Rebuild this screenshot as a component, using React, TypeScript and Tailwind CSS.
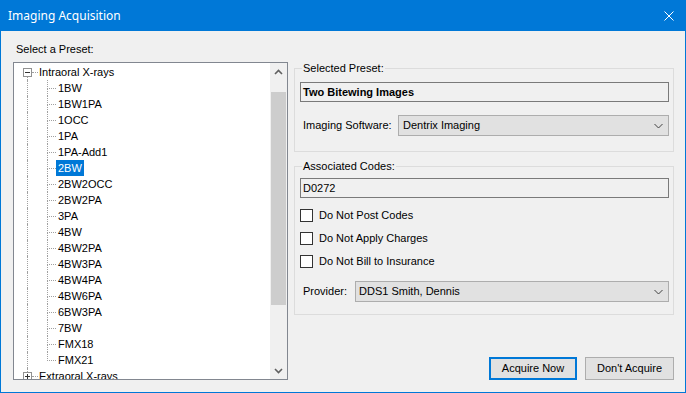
import React from "react";

const items = [
  "1BW",
  "1BW1PA",
  "1OCC",
  "1PA",
  "1PA-Add1",
  "2BW",
  "2BW2OCC",
  "2BW2PA",
  "3PA",
  "4BW",
  "4BW2PA",
  "4BW3PA",
  "4BW4PA",
  "4BW6PA",
  "6BW3PA",
  "7BW",
  "FMX18",
  "FMX21",
];

function Chevron({ up = false }: { up?: boolean }) {
  return (
    <svg width="9" height="6" viewBox="0 0 9 6" className="block">
      {up ? (
        <polyline points="1,5 4.5,1.5 8,5" fill="none" stroke="#606060" strokeWidth="1.6" />
      ) : (
        <polyline points="1,1 4.5,4.5 8,1" fill="none" stroke="#606060" strokeWidth="1.6" />
      )}
    </svg>
  );
}

function ComboChevron() {
  return (
    <svg width="9" height="6" viewBox="0 0 9 6" className="block">
      <polyline points="0.5,1 4.5,5 8.5,1" fill="none" stroke="#404040" strokeWidth="1" />
    </svg>
  );
}

function ExpandBox({ open }: { open: boolean }) {
  return (
    <div className="w-[9px] h-[9px] border border-[#919191] bg-white flex items-center justify-center relative">
      <div className="w-[5px] h-[1px] bg-[#333]" />
      {!open && <div className="absolute w-[1px] h-[5px] bg-[#333]" />}
    </div>
  );
}

function RootRow({ label, open, first }: { label: string; open: boolean; first: boolean }) {
  return (
    <div className="h-[16px] flex items-center shrink-0">
      <div className="ml-[9px] w-[9px] h-full relative flex items-center">
        <ExpandBox open={open} />
        {first ? (
          <div className="absolute left-[4px] top-[13px] bottom-0 border-l border-dotted border-[#a0a0a0]" />
        ) : (
          <div className="absolute left-[4px] top-0 h-[4px] border-l border-dotted border-[#a0a0a0]" />
        )}
      </div>
      <div className="w-[6px] border-t border-dotted border-[#a0a0a0]" />
      <span className="ml-[1px] whitespace-nowrap">{label}</span>
    </div>
  );
}

function ChildRow({ label, last, selected }: { label: string; last: boolean; selected: boolean }) {
  return (
    <div className="h-[16px] flex shrink-0">
      <div className="ml-[13px] w-[20px] h-full border-l border-dotted border-[#a0a0a0]" />
      <div className="w-[9px] h-full flex flex-col">
        <div className="h-[9px] border-l border-b border-dotted border-[#a0a0a0]" />
        {!last && <div className="flex-1 border-l border-dotted border-[#a0a0a0]" />}
      </div>
      <div
        className={
          selected
            ? "h-full px-[2px] flex items-center bg-[#0078d7] text-white whitespace-nowrap"
            : "h-full px-[2px] flex items-center whitespace-nowrap"
        }
      >
        {label}
      </div>
    </div>
  );
}

function Checkbox({ label }: { label: string }) {
  return (
    <div className="h-[23px] flex items-center">
      <div className="w-[13px] h-[13px] border border-[#333333] bg-white" />
      <span className="ml-[6px]">{label}</span>
    </div>
  );
}

export default function App() {
  return (
    <div className="w-[686px] h-[393px] flex flex-col bg-[#f0f0f0] text-[11px] leading-[13px] text-black font-['Liberation_Sans',Arial,sans-serif] overflow-hidden">
      {/* Title bar */}
      <div className="h-[31px] shrink-0 bg-[#0078d7] flex items-center justify-between pl-[8px] pr-[12px] text-white">
        <span className="text-[12px] leading-[16px] font-['Noto_Sans',sans-serif]">Imaging Acquisition</span>
        <svg width="10" height="10" viewBox="0 0 10 10" className="block">
          <line x1="0.5" y1="0.5" x2="9.5" y2="9.5" stroke="white" strokeWidth="1" />
          <line x1="9.5" y1="0.5" x2="0.5" y2="9.5" stroke="white" strokeWidth="1" />
        </svg>
      </div>

      {/* Body */}
      <div className="flex-1 flex border-x border-b border-[#0078d7]">
        {/* Left column */}
        <div className="ml-[12px] w-[275px] pt-[12px] flex flex-col">
          <div className="h-[13px] pl-[3px]">Select a Preset:</div>
          <div className="mt-[6px] h-[318px] border border-[#828790] bg-white flex">
            <div className="flex-1 overflow-hidden pt-[1px] flex flex-col">
              <RootRow label="Intraoral X-rays" open={true} first={true} />
              {items.map((it, i) => (
                <ChildRow key={it} label={it} last={i === items.length - 1} selected={it === "2BW"} />
              ))}
              <RootRow label="Extraoral X-rays" open={false} first={false} />
            </div>
            <div className="w-[17px] bg-[#f0f0f0] flex flex-col">
              <div className="h-[17px] flex items-center justify-center">
                <Chevron up />
              </div>
              <div className="mt-[12px] mx-[1px] h-[213px] bg-[#cdcdcd]" />
              <div className="flex-1" />
              <div className="h-[17px] flex items-center justify-center">
                <Chevron />
              </div>
            </div>
          </div>
        </div>

        {/* Right column */}
        <div className="ml-[6px] w-[380px] pt-[31px] flex flex-col">
          <fieldset className="border border-[#dcdcdc] pl-[5px] pr-[4px] pt-[7px] pb-[15px]">
            <legend className="ml-[2px] px-[1px] leading-[13px]">Selected Preset:</legend>
            <div className="h-[20px] border border-[#7a7a7a] bg-[#f0f0f0] pl-[2px] flex items-center font-bold">
              Two Bitewing Images
            </div>
            <div className="mt-[13px] h-[21px] flex items-center">
              <div className="w-[98px] pl-[3px]">Imaging Software:</div>
              <div className="flex-1 h-full border border-[#adadad] bg-[#e1e1e1] flex items-center justify-between pl-[4px] pr-[5px]">
                <span>Dentrix Imaging</span>
                <ComboChevron />
              </div>
            </div>
          </fieldset>

          <fieldset className="mt-[8px] border border-[#dcdcdc] pl-[5px] pr-[4px] pt-[5px] pb-[12px]">
            <legend className="ml-[2px] px-[1px] leading-[13px]">Associated Codes:</legend>
            <div className="h-[20px] border border-[#7a7a7a] bg-[#f0f0f0] pl-[2px] flex items-center">
              D0272
            </div>
            <div className="mt-[6px] flex flex-col">
              <Checkbox label="Do Not Post Codes" />
              <Checkbox label="Do Not Apply Charges" />
              <Checkbox label="Do Not Bill to Insurance" />
            </div>
            <div className="mt-[8px] h-[21px] flex items-center">
              <div className="w-[55px] pl-[3px]">Provider:</div>
              <div className="flex-1 h-full border border-[#adadad] bg-[#e1e1e1] flex items-center justify-between pl-[3px] pr-[5px]">
                <span>DDS1 Smith, Dennis</span>
                <ComboChevron />
              </div>
            </div>
          </fieldset>

          <div className="mt-auto mb-[12px] flex justify-end">
            <button className="w-[88px] h-[23px] border-2 border-[#0078d7] bg-[#e1e1e1] flex items-center justify-center">
              Acquire Now
            </button>
            <button className="ml-[8px] w-[89px] h-[23px] border border-[#adadad] bg-[#e1e1e1] flex items-center justify-center">
              Don't Acquire
            </button>
          </div>
        </div>
      </div>
    </div>
  );
}
